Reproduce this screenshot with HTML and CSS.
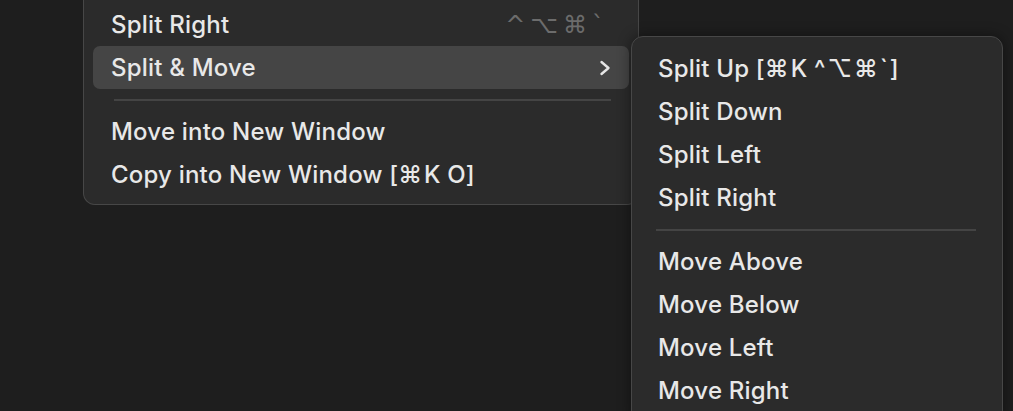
FILE: index.html
```html
<!DOCTYPE html>
<html lang="en">
<head>
<meta charset="utf-8">
<title>Split &amp; Move menu</title>
<link rel="stylesheet" href="styles.css">
</head>
<body>
<div class="stage">
  <div class="menu main-menu">
    <div class="item">
      <span class="label">Split Right</span>
      <span class="shortcut">^⌥⌘`</span>
    </div>
    <div class="item active">
      <span class="label">Split &amp; Move</span>
      <svg class="chev" width="14" height="18" viewBox="0 0 14 18" aria-hidden="true">
        <path d="M3.5 3 L10.5 9 L3.5 15" fill="none" stroke="#e6e6e6" stroke-width="2.4" stroke-linecap="round" stroke-linejoin="round"/>
      </svg>
    </div>
    <div class="sep"><span></span></div>
    <div class="item"><span class="label">Move into New Window</span></div>
    <div class="item"><span class="label">Copy into New Window [<span class="sym">⌘</span>K O]</span></div>
  </div>

  <div class="menu submenu">
    <div class="item"><span class="label">Split Up [<span class="sym">⌘</span>K <span class="sym">^⌥⌘`</span>]</span></div>
    <div class="item"><span class="label">Split Down</span></div>
    <div class="item"><span class="label">Split Left</span></div>
    <div class="item"><span class="label">Split Right</span></div>
    <div class="sep"><span></span></div>
    <div class="item"><span class="label">Move Above</span></div>
    <div class="item"><span class="label">Move Below</span></div>
    <div class="item"><span class="label">Move Left</span></div>
    <div class="item"><span class="label">Move Right</span></div>
  </div>
</div>
</body>
</html>
```

FILE: styles.css
```css
html, body {
  margin: 0;
  padding: 0;
  background: #1e1e1e;
}

body {
  font-family: Inter, "Noto Sans", "DejaVu Sans", sans-serif;
  font-size: 24px;
  font-weight: 500;
  color: #e8e8e8;
}

.stage {
  position: relative;
  width: 1013px;
  height: 411px;
  overflow: hidden;
}

.menu {
  background: #2b2b2b;
  border: 1px solid #474747;
  box-sizing: border-box;
}

.main-menu {
  margin-left: 83px;
  width: 556px;
  border-top: none;
  border-radius: 0 0 12px 12px;
  padding: 3px 9px 8px 9px;
}

.item {
  height: 43px;
  display: flex;
  align-items: center;
  justify-content: space-between;
  padding: 0 20px 0 18px;
  border-radius: 7px;
  white-space: nowrap;
}

.label {
  letter-spacing: 0.2px;
}

.sym {
  letter-spacing: 2px;
}

.item.active {
  background: #454545;
}

.shortcut {
  color: #6c6c6c;
  letter-spacing: 5px;
  font-family: "DejaVu Sans", sans-serif;
  font-weight: 400;
  font-size: 24px;
  margin-right: 0;
}

.chev {
  display: block;
  margin-right: -3px;
}

.sep {
  height: 21px;
  display: flex;
  align-items: center;
  padding: 0 18px 0 21px;
}

.sep span {
  display: block;
  flex: 1;
  height: 2px;
  background: #444444;
}

.submenu {
  position: absolute;
  left: 631px;
  top: 36px;
  width: 372px;
  border-radius: 12px;
  padding: 10px 9px;
  box-shadow: 0 0 14px rgba(0, 0, 0, 0.45);
}

.submenu .item {
  padding-left: 17px;
}

.submenu .sep {
  padding: 0 17px 0 15px;
}
```
